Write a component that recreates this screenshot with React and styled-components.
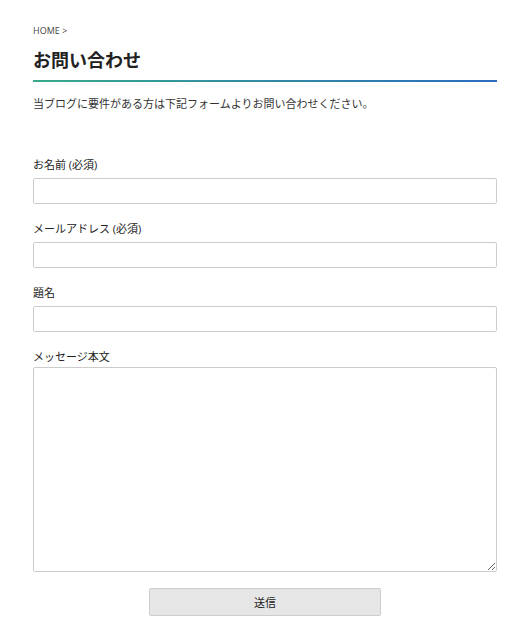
import styled, { createGlobalStyle } from "styled-components";

const GlobalStyle = createGlobalStyle`
  body {
    margin: 0;
    background: #fff;
    color: #333;
    font-family: "Open Sans", "Noto Sans CJK JP", sans-serif;
  }
`;

const Page = styled.main`
  width: 464px;
  margin-left: 33px;
  padding-top: 24px;
`;

const Breadcrumb = styled.div`
  font-size: 9px;
  line-height: 14px;
  color: #444;
`;

const Title = styled.h1`
  margin: 10px 0 0;
  padding-bottom: 8px;
  font-size: 18px;
  line-height: 24px;
  font-weight: 700;
  color: #222;
  border-bottom: 2px solid;
  border-image: linear-gradient(90deg, #38a98a, #2a6cbf) 1;
`;

const Lead = styled.p`
  margin: 13px 0 0;
  font-size: 11px;
  line-height: 18px;
  color: #333;
`;

const Form = styled.form`
  display: flex;
  flex-direction: column;
  margin-top: 45px;
`;

const Field = styled.div`
  display: flex;
  flex-direction: column;
  margin-bottom: 18px;
`;

const Label = styled.label`
  font-size: 11px;
  line-height: 14px;
  color: #222;
  margin-bottom: ${(p) => (p.$tight ? "3px" : "6px")};
`;

const Input = styled.input`
  box-sizing: border-box;
  width: 100%;
  height: 26px;
  border: 1px solid #ccc;
  border-radius: 2px;
  background: #fff;
  padding: 4px 6px;
  font: inherit;
  outline: none;
`;

const TextArea = styled.textarea`
  box-sizing: border-box;
  width: 100%;
  height: 205px;
  border: 1px solid #ccc;
  border-radius: 2px;
  padding: 4px 6px;
  font: inherit;
  outline: none;
  resize: vertical;
  display: block;
`;

const Submit = styled.button`
  align-self: center;
  width: 232px;
  height: 28px;
  margin-top: -2px;
  border: 1px solid #ccc;
  border-radius: 2px;
  background: #e6e6e6;
  color: #222;
  font-family: "Noto Sans CJK JP", sans-serif;
  font-size: 11px;
  cursor: pointer;
`;

export default function App() {
  return (
    <>
      <GlobalStyle />
      <Page>
        <Breadcrumb>HOME &gt;</Breadcrumb>
        <Title>お問い合わせ</Title>
        <Lead>当ブログに要件がある方は下記フォームよりお問い合わせください。</Lead>
        <Form onSubmit={(e) => e.preventDefault()}>
          <Field>
            <Label>お名前 (必須)</Label>
            <Input type="text" />
          </Field>
          <Field>
            <Label>メールアドレス (必須)</Label>
            <Input type="email" />
          </Field>
          <Field>
            <Label>題名</Label>
            <Input type="text" />
          </Field>
          <Field>
            <Label $tight>メッセージ本文</Label>
            <TextArea />
          </Field>
          <Submit type="submit">送信</Submit>
        </Form>
      </Page>
    </>
  );
}
